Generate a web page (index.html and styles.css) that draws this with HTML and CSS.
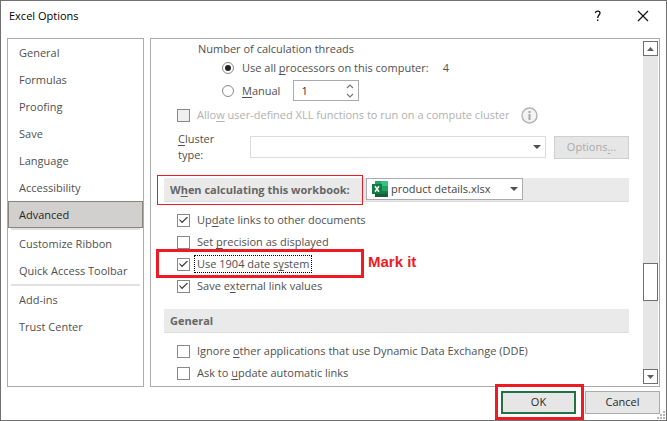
FILE: index.html
```html
<!DOCTYPE html>
<html lang="en">
<head>
<meta charset="utf-8">
<title>Excel Options</title>
<link rel="stylesheet" href="styles.css">
</head>
<body>
<div class="dialog">
  <header class="titlebar">
    <h1>Excel Options</h1>
    <button class="caption" aria-label="Help"><svg width="8" height="12" viewBox="0 0 8 12"><path d="M1.500 3V2.600C1.800.6 6 .6 6 3 6 5 3.700 5.200 3.700 8" fill="none" stroke="#111" stroke-width="1.300"/><path d="M3 9.500h1.400v1.500H3z" fill="#111"/></svg></button>
    <button class="caption" aria-label="Close"><svg width="12" height="12" viewBox="0 0 12 12"><path d="M1 1l10 10M11 1L1 11" stroke="#111" stroke-width="1.200"/></svg></button>
  </header>
  <main class="panes">
    <nav class="sidebar">
      <a href="#general">General</a>
      <a href="#formulas">Formulas</a>
      <a href="#proofing">Proofing</a>
      <a href="#save">Save</a>
      <a href="#language">Language</a>
      <a href="#accessibility">Accessibility</a>
      <a href="#advanced" class="current">Advanced</a>
      <hr>
      <a href="#ribbon">Customize Ribbon</a>
      <a href="#toolbar">Quick Access Toolbar</a>
      <hr>
      <a href="#addins">Add-ins</a>
      <a href="#trust">Trust Center</a>
    </nav>
    <div class="content">
      <form class="settings">
        <fieldset class="threads">
          <legend>Number of calculation threads</legend>
          <div class="option"><input type="radio" name="threads" id="all" checked><label for="all">Use all <u>p</u>rocessors on this computer:</label><output class="count">4</output></div>
          <div class="option manual"><input type="radio" name="threads" id="manual"><label for="manual"><u>M</u>anual</label>
            <span class="spinner"><input type="text" value="1" aria-label="Thread count"><svg width="8" height="14" viewBox="0 0 8 14"><path d="M1 4l3-3 3 3M1 10l3 3 3-3" fill="none" stroke="#777" stroke-width="1.200"/></svg></span>
          </div>
        </fieldset>
        <div class="check cluster-check off"><input type="checkbox" id="xll" disabled><label for="xll">Allo<u>w</u> user-defined XLL functions to run on a compute cluster</label><svg class="info" width="17" height="17" viewBox="0 0 17 17"><circle cx="8.500" cy="8.500" r="7.500" fill="#f3f3f3" stroke="#b2b2b2" stroke-width="1.400"/><path d="M7.500 4h2v2h-2zM7.500 7h2v6h-2z" fill="#a6a6a6"/></svg></div>
        <div class="cluster">
          <label for="cluster"><u>C</u>luster type:</label>
          <span class="dropdown pale"><select id="cluster" disabled><option></option></select><svg width="8" height="4" viewBox="0 0 8 4"><path d="M0 0h8L4 4z" fill="#505050"/></svg></span>
          <button type="button" class="button" disabled>Options<u>.</u>..</button>
        </div>
        <section>
          <div class="heading">
            <label for="book">W<u>h</u>en calculating this workbook:</label>
            <span class="dropdown book"><svg class="excel" width="16" height="16" viewBox="0 0 16 16"><path d="M3 0h6v5H3z" fill="#21a366"/><path d="M9 0h7v5H9z" fill="#33c481"/><path d="M3 5h6v5H3z" fill="#107c41"/><path d="M9 5h7v5H9z" fill="#21a366"/><path d="M3 10h13v6H3z" fill="#185c37"/><path d="M9 10h7v3H9z" fill="#107c41"/><path d="M0 3h10v10H0z" fill="#107c41"/><path d="M3 5.300l4 5.400M7 5.300l-4 5.400" stroke="#fff" stroke-width="1.500"/></svg><select id="book"><option>product details.xlsx</option></select><svg width="8" height="4" viewBox="0 0 8 4"><path d="M0 0h8L4 4z" fill="#505050"/></svg></span>
            <span class="mark mark-heading"></span>
          </div>
          <div class="check"><input type="checkbox" id="links" checked><label for="links">Up<u>d</u>ate links to other documents</label></div>
          <div class="check"><input type="checkbox" id="precision"><label for="precision">Set <u>p</u>recision as displayed</label></div>
          <div class="check"><input type="checkbox" id="date" checked><label for="date" class="focused">Use 1904 date s<u>y</u>stem</label><span class="mark mark-row"></span><strong class="note">Mark it</strong></div>
          <div class="check"><input type="checkbox" id="values" checked><label for="values">Save e<u>x</u>ternal link values</label></div>
        </section>
        <section>
          <h2 class="heading">General</h2>
          <div class="check"><input type="checkbox" id="dde"><label for="dde">Ignore <u>o</u>ther applications that use Dynamic Data Exchange (DDE)</label></div>
          <div class="check"><input type="checkbox" id="ask"><label for="ask">Ask to <u>u</u>pdate automatic links</label></div>
        </section>
      </form>
      <div class="scrollbar">
        <button aria-label="Scroll up"><svg width="7" height="4" viewBox="0 0 7 4"><path d="M0 4h7L3.500 0z" fill="#606060"/></svg></button>
        <div class="track"><span class="thumb"></span></div>
        <button aria-label="Scroll down"><svg width="7" height="4" viewBox="0 0 7 4"><path d="M0 0h7L3.500 4z" fill="#606060"/></svg></button>
      </div>
    </div>
  </main>
  <footer class="actions">
    <span class="ok"><button class="button primary">OK</button><span class="mark mark-ok"></span></span>
    <button class="button">Cancel</button>
    <svg class="grip" width="8" height="8" viewBox="0 0 8 8"><path d="M6 0h2v2H6zM3 3h2v2H3zM6 3h2v2H6zM0 6h2v2H0zM3 6h2v2H3zM6 6h2v2H6z" fill="#b8b8b8"/></svg>
  </footer>
</div>
</body>
</html>
```
FILE: styles.css
```css
* { box-sizing: border-box; }
body { margin: 0; color: #505050; font: 11px/16px "Open Sans", "Noto Sans", sans-serif; }
button, input, select { margin: 0; padding: 0; color: inherit; font: inherit; }
u { text-underline-offset: 2px; text-decoration-skip-ink: none; }
svg { display: block; flex: none; }

.dialog { position: relative; display: flex; flex-direction: column; height: 100vh; border: 1px solid #707070; background: #fff; }
.titlebar { display: flex; align-items: center; height: 30px; padding: 0 11px 0 8px; color: #000; }
.titlebar h1 { flex: 1; margin: 0; font: inherit; }
.caption { display: grid; place-items: center; width: 24px; height: 24px; border: 0; background: none; }
.caption + .caption { margin-left: 21px; }

.panes { display: flex; flex: 1; gap: 6px; min-height: 0; margin-top: 7px; padding: 0 6px; }
.sidebar { flex: none; width: 137px; border: 1px solid #ababab; }
.sidebar a { display: block; height: 27px; padding: 0 11px; line-height: 28px; color: inherit; text-decoration: none; white-space: nowrap; }
.sidebar .current { padding: 0 10px; border: 1px solid #86867f; background: #d2d0ce; color: #262626; line-height: 26px; }
.sidebar hr { height: 2px; margin: 0 3px; border: 0; background: #e1e1e1; }

.content { display: flex; flex: 1; min-width: 0; border: 1px solid #ababab; padding: 2px 1px 2px 13px; }
.settings { flex: 1; min-width: 0; margin-right: 14px; }
.threads { min-width: 0; margin: 0; padding: 0 0 0 34px; border: 0; }
.threads legend { padding: 0; line-height: 15px; }
.option { display: flex; align-items: center; height: 23px; padding-left: 24px; }
.option label { margin-left: 8px; }
.count { margin-left: 14px; }
input[type="radio"] { display: grid; place-items: center; flex: none; width: 12px; height: 12px; appearance: none; border: 1px solid #888; border-radius: 50%; }
input[type="radio"]:checked::before { content: ""; width: 6px; height: 6px; border-radius: 50%; background: #222; }
.spinner { display: flex; align-items: center; width: 66px; height: 21px; margin-left: 13px; padding: 0 4px 0 7px; border: 1px solid #ababab; }
.spinner input { flex: 1; width: 0; height: 18px; border: 0; outline: 0; background: none; color: #333; }

.check { position: relative; display: flex; align-items: center; height: 22px; padding-left: 13px; white-space: nowrap; }
.check label { margin-left: 4px; padding: 0 2px; border: 1px solid transparent; }
.check .focused { border: 1px dotted #000; }
input[type="checkbox"] { display: grid; place-items: center; flex: none; width: 13px; height: 13px; appearance: none; border: 1px solid #888; background: #fff; }
input[type="checkbox"]:checked::before { content: ""; width: 9px; height: 7px; background: #333; clip-path: polygon(0 48%, 9% 38%, 34% 72%, 91% 0, 100% 11%, 34% 96%); }
.off { color: #b1b1b1; }
input[type="checkbox"]:disabled { background: #f0f0f0; }
.cluster-check { height: 26px; }
.info { margin-left: 8px; }

.cluster { display: flex; align-items: center; height: 38px; padding-left: 14px; }
.cluster label { width: 72px; padding-right: 20px; line-height: 16px; }
.dropdown { display: flex; align-items: center; height: 22px; border: 1px solid #ababab; background: #fff; }
.dropdown select { flex: 1; min-width: 0; height: 20px; appearance: none; border: 0; outline: 0; background: none; }
.dropdown svg:last-child { margin-right: 4px; }
.pale { flex: 1; border-color: #dcdcdc; }
.button { flex: none; width: 75px; height: 23px; border: 1px solid #ababab; background: #e6e6e6; color: #262626; }
.button:disabled { margin-left: 8px; border-color: #cfcfcf; color: #aaa; }

section { padding-bottom: 12px; }
.cluster + section { margin-top: 12px; }
.heading { position: relative; display: flex; align-items: center; height: 24px; margin: 0 0 7px; padding-left: 6px; border-bottom: 1px solid #dcdde2; background: #eaeaea; font-size: 11px; font-weight: 700; color: #666; }
.book { position: absolute; top: 0; left: 202px; width: 157px; padding-left: 5px; color: #444; font-weight: 400; }
.book select { margin-left: 3px; }

.mark { position: absolute; border: 3px solid #ed1c24; pointer-events: none; }
.mark-heading { top: -3px; left: -7px; width: 206px; height: 30px; border-width: 1px; }
.mark-row { top: -4px; left: -8px; width: 208px; height: 29px; }
.note { position: absolute; top: -1px; left: 204px; color: #ed1c24; font: 700 15px/20px "Liberation Sans", sans-serif; }
.mark-ok { inset: -7px -8px -6px -6px; }

.scrollbar { display: flex; flex-direction: column; width: 15px; background: #e6e6e6; }
.scrollbar button { display: grid; place-items: center; width: 15px; height: 15px; border: 1px solid #707070; background: #fff; }
.track { flex: 1; padding-top: 207px; }
.thumb { display: block; height: 38px; border: 1px solid #707070; background: #fff; }

.actions { display: flex; align-items: center; justify-content: flex-end; gap: 9px; height: 33px; padding: 0 6px 3px 0; }
.ok { position: relative; display: flex; }
.primary { border: 2px solid #217346; }
.grip { position: absolute; right: 1px; bottom: 1px; }
```
